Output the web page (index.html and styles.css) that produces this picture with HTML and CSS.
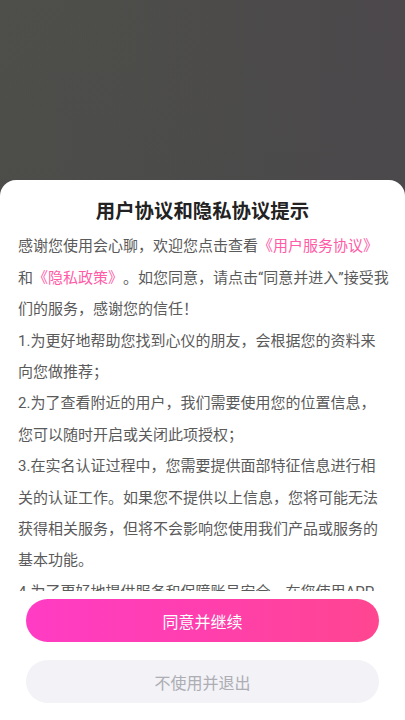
FILE: index.html
```html
<!DOCTYPE html>
<html lang="zh-CN">
<head>
<meta charset="utf-8">
<meta name="viewport" content="width=405, initial-scale=1">
<title>用户协议和隐私协议提示</title>
<link rel="stylesheet" href="styles.css">
</head>
<body>
<div class="screen">
  <div class="sheet">
    <h1 class="title">用户协议和隐私协议提示</h1>
    <div class="content">
      <p class="para">感谢您使用会心聊，欢迎您点击查看<span class="link">《用户服务协议》</span>和<span class="link">《隐私政策》</span>。如您同意，请点击“同意并进入”接受我们的服务，感谢您的信任！</p>
      <p class="para">1.为更好地帮助您找到心仪的朋友，会根据您的资料来向您做推荐；</p>
      <p class="para">2.为了查看附近的用户，我们需要使用您的位置信息，您可以随时开启或关闭此项授权；</p>
      <p class="para">3.在实名认证过程中，您需要提供面部特征信息进行相关的认证工作。如果您不提供以上信息，您将可能无法获得相关服务，但将不会影响您使用我们产品或服务的基本功能。</p>
      <p class="para">4.为了更好地提供服务和保障账号安全，在您使用APP时，我们会收集您的设备信息，用于识别异常状态。</p>
    </div>
    <div class="actions">
      <button class="btn btn-primary" type="button">同意并继续</button>
      <button class="btn btn-secondary" type="button">不使用并退出</button>
    </div>
  </div>
</div>
</body>
</html>
```

FILE: styles.css
```css
* {
  box-sizing: border-box;
}

html, body {
  margin: 0;
  padding: 0;
}

body {
  width: 405px;
  height: 720px;
  overflow: hidden;
  font-family: "Roboto", "Noto Sans CJK SC", sans-serif;
  background: linear-gradient(90deg, #4e4f4a 0%, #4c4b4a 55%, #4c484c 100%);
}

.screen {
  height: 720px;
  display: flex;
  flex-direction: column;
  justify-content: flex-end;
  background: linear-gradient(180deg, rgba(0,0,0,0) 0%, rgba(74,74,74,0.6) 40%, #4b4b4b 100%);
}

.sheet {
  height: 540px;
  background: #ffffff;
  border-radius: 16px 16px 0 0;
  display: flex;
  flex-direction: column;
}

.title {
  margin: 0;
  padding-top: 20px;
  height: 44px;
  line-height: 24px;
  font-size: 19.4px;
  font-weight: 700;
  color: #222222;
  text-align: center;
}

.content {
  margin-top: 7.3px;
  flex: 1 1 auto;
  min-height: 0;
  overflow: hidden;
  padding: 0 16px 0 18px;
}

.para {
  margin: 0;
  font-size: 15px;
  line-height: 31.4px;
  color: #5a5a5a;
  text-spacing-trim: space-all;
}

.link {
  color: #ff5ba6;
}

.actions {
  padding: 8px 26px 17px;
  display: flex;
  flex-direction: column;
  gap: 18px;
}

.btn {
  height: 43px;
  width: 100%;
  border: none;
  border-radius: 22px;
  font-family: "Roboto", "Noto Sans CJK SC", sans-serif;
  font-size: 16px;
  padding: 0;
}

.btn-primary {
  background: linear-gradient(90deg, #ff3cc4 0%, #ff3fae 50%, #ff4690 100%);
  color: #ffffff;
}

.btn-secondary {
  background: #f2f2f7;
  color: #adadb3;
}
```
